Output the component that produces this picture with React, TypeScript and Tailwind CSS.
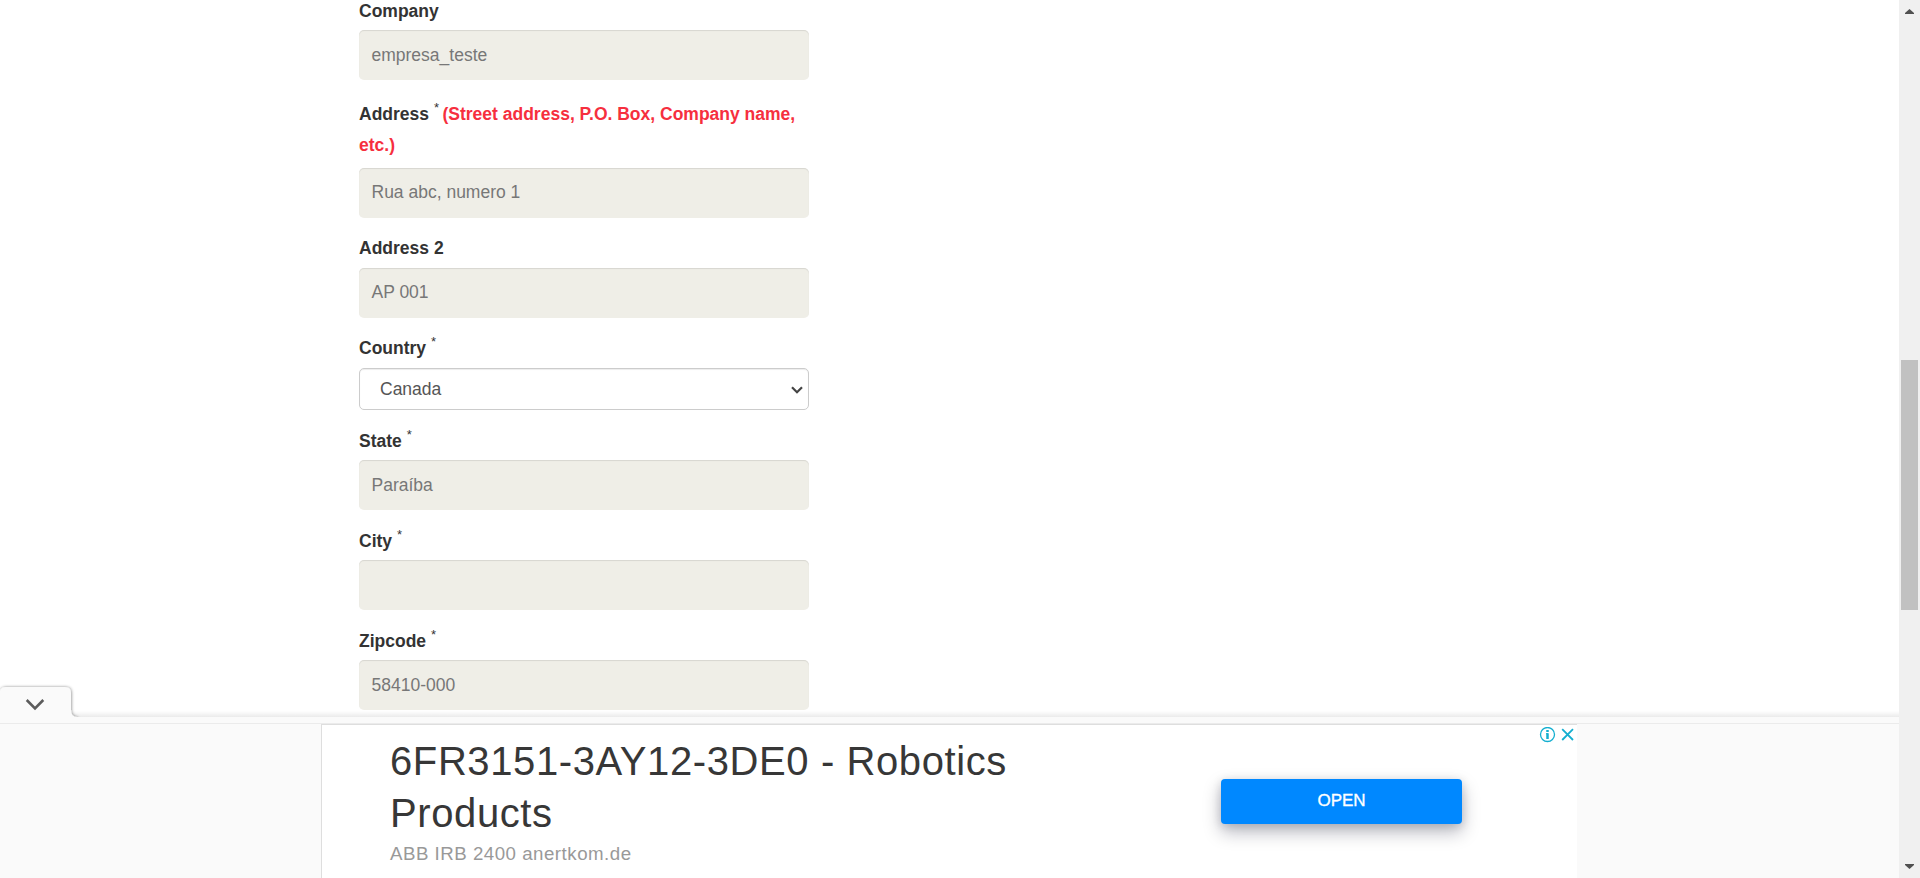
import React from "react";

type LabelProps = { label: string; required?: boolean; hint?: string };
type FieldProps = LabelProps & { value: string; low?: boolean };

function Label({ label, required, hint }: LabelProps) {
  return (
    <label className="block text-[17.5px] leading-[31px] font-bold text-[#333]">
      {label}
      {required && (
        <span className="relative -top-2 ml-[5px] text-[13px] leading-none font-normal">*</span>
      )}
      {hint && <span className="-ml-[1.5px] text-[#f62f3e]"> {hint}</span>}
    </label>
  );
}

function Field({ label, value, required, hint, low }: FieldProps) {
  return (
    <div className={`${low ? "pt-px" : ""} mb-[15px]`}>
      <Label label={label} required={required} hint={hint} />
      <div
        className={`${hint ? "mt-[7px]" : low ? "mt-[3px]" : "mt-1"} ${low ? "pt-px" : "pb-px"} flex h-[50px] items-center rounded-[5px] bg-[#efeee7] px-[12.5px] text-[17.5px] text-[#777] shadow-[inset_0_1px_1px_rgba(0,0,0,0.1)]`}
      >
        {value}
      </div>
    </div>
  );
}

export default function App() {
  return (
    <div className="flex h-[878px] w-[1920px] overflow-hidden bg-white font-['Liberation_Sans',Arial,sans-serif]">
      <div className="relative flex h-full w-[1899px] flex-col">
        <main className="h-[717px] overflow-hidden pl-[359px]">
          <form className="-mt-[5px] w-[450px]">
            <Field label="Company" value="empresa_teste" low />
            <div className="h-1" />
            <Field label="Address" required hint="(Street address, P.O. Box, Company name, etc.)" value="Rua abc, numero 1" />
            <Field label="Address 2" value="AP 001" />
            <div className="mb-[15px]">
              <Label label="Country" required />
              <div className="mt-1 flex h-[42px] items-center justify-between rounded-[5px] border border-[#ccc] pr-[5px] pl-5 text-[17.5px] text-[#555] shadow-[inset_0_1px_1px_rgba(0,0,0,0.075)]">
                <span>Canada</span>
                <svg className="mt-0.5" width="12" height="8" viewBox="0 0 12 8" fill="none" stroke="#444" strokeWidth="2.2">
                  <path d="M1 1.2 6 6.2 11 1.2" />
                </svg>
              </div>
            </div>
            <Field label="State" required value="Paraíba" low />
            <Field label="City" required value="" low />
            <Field label="Zipcode" required value="58410-000" low />
          </form>
        </main>

        <div className="absolute top-[711px] left-[72px] h-[6px] w-[1827px] bg-linear-to-b from-transparent to-black/8" />
        <svg className="absolute top-[681px] left-0" width="92" height="43" viewBox="0 0 92 43">
          <defs>
            <filter id="tabShadow" x="-10%" y="-20%" width="130%" height="140%">
              <feDropShadow dx="0.5" dy="0" stdDeviation="1.5" floodColor="#000" floodOpacity="0.45" />
            </filter>
            <clipPath id="tabClip">
              <path d="M0 0H92V36H0Z" />
            </clipPath>
          </defs>
          <g clipPath="url(#tabClip)">
            <path d="M0 43V10Q1 6 6 6H65Q71 6 71 12V29Q71 36 77 36V43Z" fill="#fafafa" filter="url(#tabShadow)" />
          </g>
          <path d="M26.700 19 35 27.300 43.300 19" fill="none" stroke="#5c5c5c" strokeWidth="2.600" />
        </svg>

        <section className="flex h-[161px] flex-col bg-[#fafafa]">
          <div className="h-[6px]" />
          <div className="h-px bg-[#ebebeb]" />
          <div className="flex min-h-0 flex-1 bg-[#fafafa] pl-[321px]">
            <div className="relative flex w-[1256px] border-t border-l border-[#dedede] bg-white">
              <div className="w-[830px] pt-[10px] pl-[68px]">
                <h2 className="w-[700px] text-[40px] leading-[52px] tracking-[0.6px] text-[#373737]">
                  6FR3151-3AY12-3DE0 - Robotics Products
                </h2>
                <p className="mt-[3px] text-[18.7px] leading-[24px] tracking-[0.5px] text-[#999]">ABB IRB 2400 anertkom.de</p>
              </div>
              <button className="mt-[54px] ml-[69px] flex h-[45px] w-[241px] items-center justify-center rounded-[4px] bg-[#0088ff] pb-px text-[17px] text-white [-webkit-text-stroke:0.35px_white] shadow-[0_8px_18px_rgba(0,8,35,0.28),0_2px_10px_rgba(0,8,35,0.14)]">
                OPEN
              </button>
              <svg className="absolute top-[2px] right-0" width="40" height="17" viewBox="0 0 40 17" fill="none" stroke="#14afd0">
                <circle cx="10.500" cy="7.500" r="7" strokeWidth="1.300" />
                <path d="M10.500 3V5M10.500 6.200V12" strokeWidth="2.500" />
                <path d="M9 6.700H11" strokeWidth="1" />
                <path d="M25.200 2.200 36 13M36 2.200 25.200 13" strokeWidth="1.800" />
              </svg>
            </div>
          </div>
        </section>
      </div>

      <aside className="flex h-full w-[21px] flex-col items-center bg-[#f0f0f0]">
        <svg width="9" height="14" viewBox="0 0 9 14" fill="#505050">
          <path d="M0 14H9V13L4.500 9 0 13Z" />
        </svg>
        <div className="mt-[346px] h-[250px] w-[17px] bg-[#c1c1c1]" />
        <svg className="mt-[254px]" width="9" height="5" viewBox="0 0 9 5" fill="#505050">
          <path d="M0 0H9V1L4.500 5 0 1Z" />
        </svg>
      </aside>
    </div>
  );
}
